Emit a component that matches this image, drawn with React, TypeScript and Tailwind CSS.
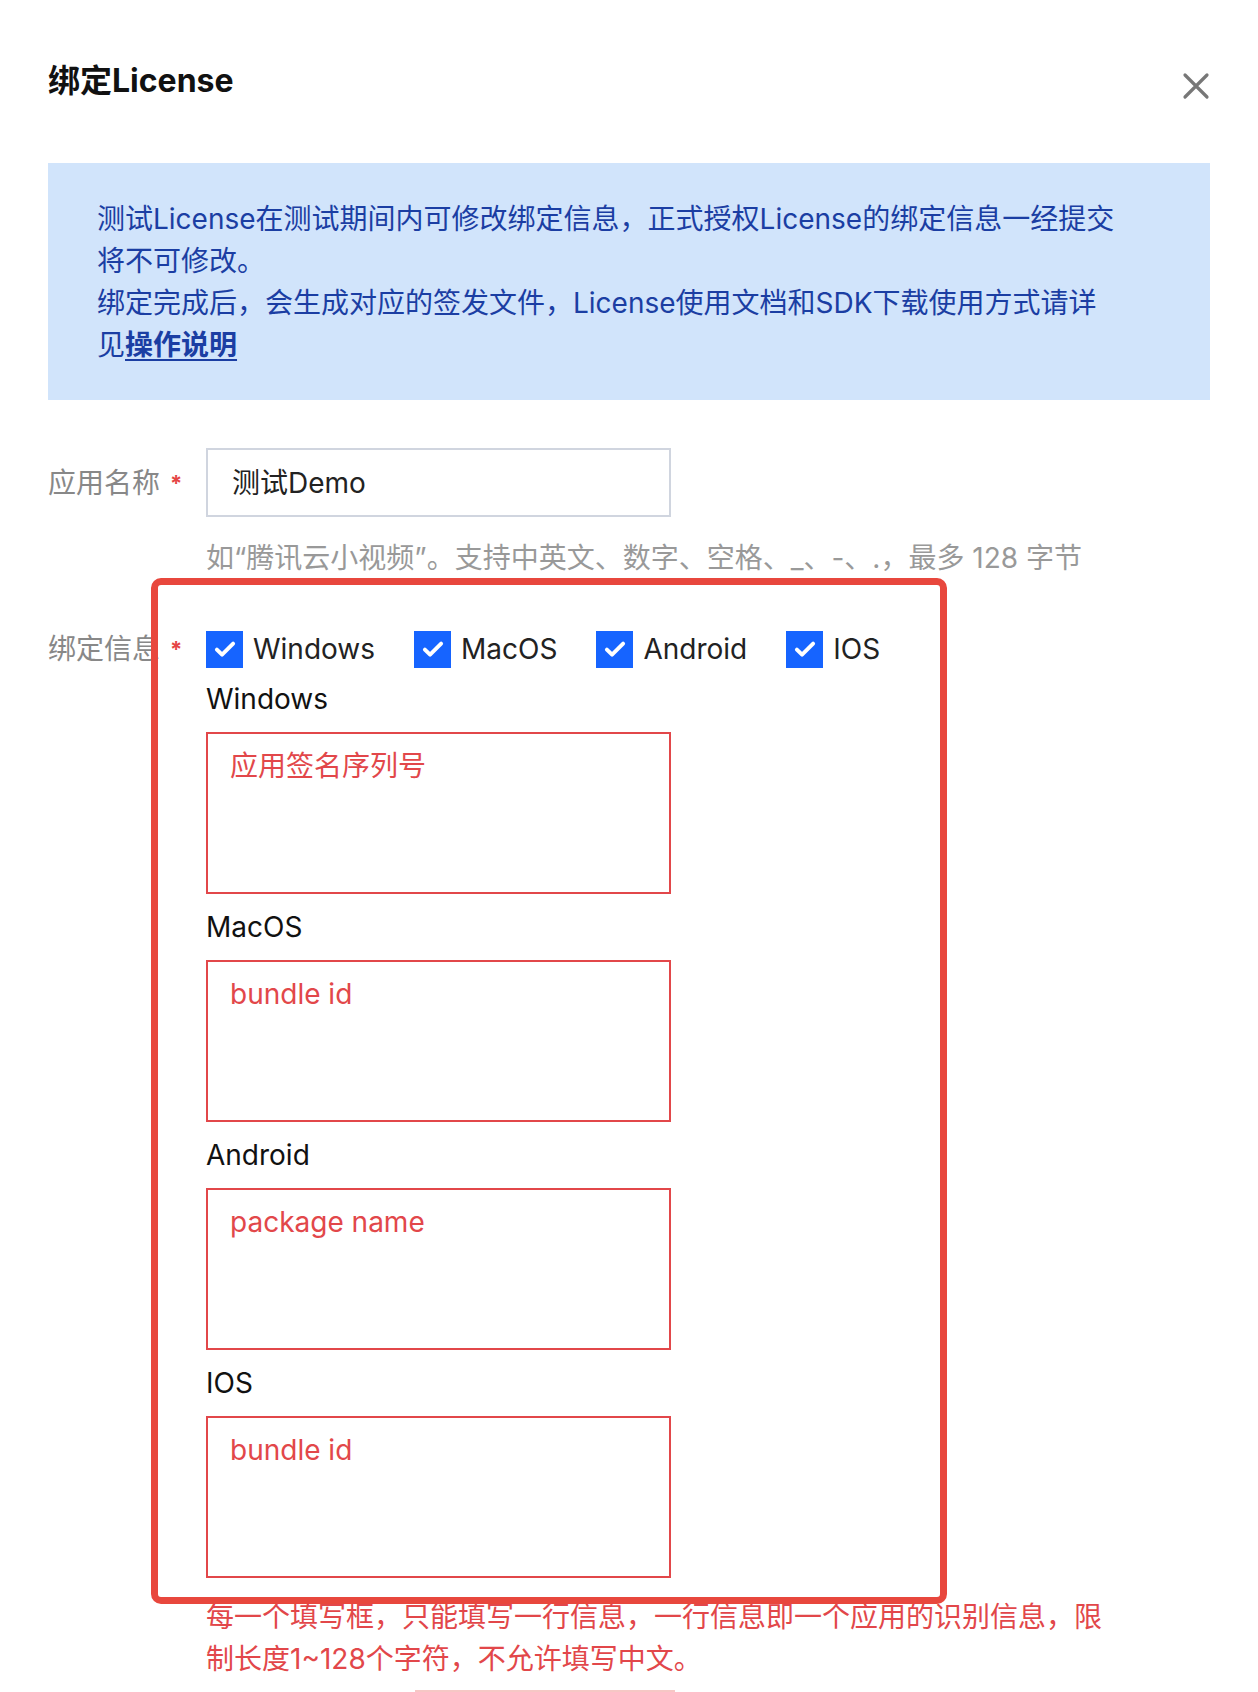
import React from 'react';

const platforms = [
  { name: 'Windows', placeholder: '应用签名序列号' },
  { name: 'MacOS', placeholder: 'bundle id' },
  { name: 'Android', placeholder: 'package name' },
  { name: 'IOS', placeholder: 'bundle id' },
];

const CheckItem = ({ label }: { label: string }) => (
  <label className="mr-[39px] flex items-center gap-[10px]">
    <span className="flex h-[37px] w-[37px] items-center justify-center bg-[#1664ff]">
      <svg width="26" height="26" viewBox="0 0 24 24" fill="none">
        <path d="M4.5 12.5l4.8 4.8L19.5 7" stroke="#fff" strokeWidth="3.6" strokeLinecap="round" strokeLinejoin="round" />
      </svg>
    </span>
    <span className="text-[28px] leading-[42px] text-[#222]">{label}</span>
  </label>
);

const FieldLabel = ({ text }: { text: string }) => (
  <div className="flex w-[158px] shrink-0 items-center">
    <span className="text-[28px] leading-[42px] text-[#888]">{text}</span>
    <span className="ml-[10px] text-[22px] font-bold leading-[42px] text-[#e54545]">*</span>
  </div>
);

export default function App() {
  return (
    <div className="min-h-[1692px] overflow-hidden bg-white px-[48px] pt-[61px] font-['Inter','Noto_Sans_CJK_SC',sans-serif] antialiased">
      {/* header */}
      <div className="flex items-start justify-between">
        <h1 className="text-[32px] font-bold leading-[40px] text-[#111]">绑定License</h1>
        <button className="mt-[11px] text-[#777]">
          <svg width="28" height="28" viewBox="0 0 28 28" fill="none">
            <path d="M3 3l22 22M25 3L3 25" stroke="currentColor" strokeWidth="3.2" strokeLinecap="round" />
          </svg>
        </button>
      </div>

      {/* notice */}
      <div className="mt-[62px] bg-[#d1e4fb] px-[49px] pt-[35px] pb-[34px] text-[28px] leading-[42px] text-[#1b3ea3]">
        <p className="w-[1024px]">测试License在测试期间内可修改绑定信息，正式授权License的绑定信息一经提交将不可修改。</p>
        <p className="w-[1024px]">
          绑定完成后，会生成对应的签发文件，License使用文档和SDK下载使用方式请详见
          <a className="font-bold underline underline-offset-[4px]">操作说明</a>
        </p>
      </div>

      {/* form */}
      <div className="relative">
        <div className="mt-[48px] flex items-center">
          <FieldLabel text="应用名称" />
          <div className="flex h-[69px] w-[465px] items-center border-2 border-[#d0d5df] px-[24px] text-[28px] text-[#222]">
            测试Demo
          </div>
        </div>
        <p className="mt-[20px] ml-[158px] text-[28px] leading-[42px] text-[#999]">
          如“腾讯云小视频”。支持中英文、数字、空格、_、-、.，最多 128 字节
        </p>

        <div className="mt-[49px] flex items-start">
          <FieldLabel text="绑定信息" />
          <div className="w-[910px]">
            <div className="flex items-center">
              {platforms.map(p => (
                <CheckItem key={p.name} label={p.name} />
              ))}
            </div>
            <div className="mt-[8px] flex flex-col gap-[12px]">
              {platforms.map(p => (
                <div key={p.name}>
                  <div className="text-[28px] leading-[42px] text-[#111]">{p.name}</div>
                  <div className="mt-[12px] h-[162px] w-[465px] border-2 border-[#e2474a] px-[22px] pt-[11px] text-[28px] leading-[42px] text-[#e2474a]">
                    {p.placeholder}
                  </div>
                </div>
              ))}
            </div>
            <p className="mt-[18px] text-[28px] leading-[42px] text-[#e2474a]">
              每一个填写框，只能填写一行信息，一行信息即一个应用的识别信息，限制长度1~128个字符，不允许填写中文。
            </p>
            <div className="mt-[10px] ml-[209px] h-[3px] w-[260px] bg-[#f6c7c5]" />
          </div>
        </div>

        {/* annotation outline */}
        <div className="pointer-events-none absolute top-[130px] left-[103px] h-[1026px] w-[796px] rounded-[10px] border-[7px] border-[#e8473d]" />
      </div>
    </div>
  );
}
